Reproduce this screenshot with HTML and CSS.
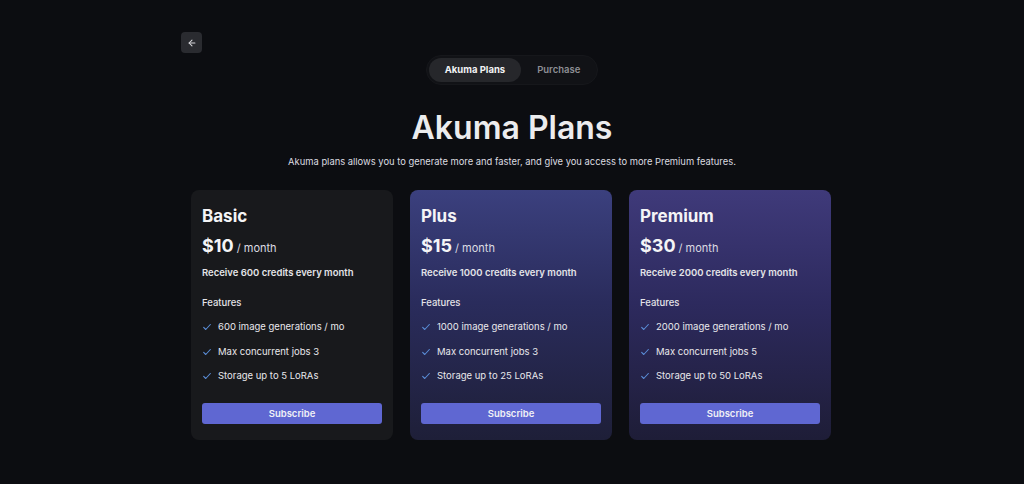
FILE: index.html
```html
<!DOCTYPE html>
<html lang="en">
<head>
<meta charset="utf-8">
<title>Akuma Plans</title>
<link rel="stylesheet" href="styles.css">
</head>
<body>
<div class="page">
  <div class="topbar">
    <button class="back" aria-label="Back">
      <svg width="10" height="10" viewBox="0 0 24 24" fill="none" stroke="currentColor" stroke-width="2.5" stroke-linecap="round" stroke-linejoin="round"><path d="M19 12H5"/><path d="M12 19l-7-7 7-7"/></svg>
    </button>
  </div>
  <div class="tabs-row">
    <div class="tabs">
      <span class="tab active">Akuma Plans</span>
      <span class="tab">Purchase</span>
    </div>
  </div>
  <h1 class="title">Akuma Plans</h1>
  <p class="subtitle">Akuma plans allows you to generate more and faster, and give you access to more Premium features.</p>
  <div class="cards">
    <div class="card basic">
      <h2 class="plan">Basic</h2>
      <div class="price"><span class="amount">$10</span><span class="per">/ month</span></div>
      <div class="credits">Receive 600 credits every month</div>
      <div class="features-label">Features</div>
      <ul class="features">
        <li><svg class="check" viewBox="0 0 12 12"><path d="M2 6.5l2.5 2.5L10 3"/></svg>600 image generations / mo</li>
        <li><svg class="check" viewBox="0 0 12 12"><path d="M2 6.5l2.5 2.5L10 3"/></svg>Max concurrent jobs 3</li>
        <li><svg class="check" viewBox="0 0 12 12"><path d="M2 6.5l2.5 2.5L10 3"/></svg>Storage up to 5 LoRAs</li>
      </ul>
      <button class="subscribe">Subscribe</button>
    </div>
    <div class="card plus">
      <h2 class="plan">Plus</h2>
      <div class="price"><span class="amount">$15</span><span class="per">/ month</span></div>
      <div class="credits">Receive 1000 credits every month</div>
      <div class="features-label">Features</div>
      <ul class="features">
        <li><svg class="check" viewBox="0 0 12 12"><path d="M2 6.5l2.5 2.5L10 3"/></svg>1000 image generations / mo</li>
        <li><svg class="check" viewBox="0 0 12 12"><path d="M2 6.5l2.5 2.5L10 3"/></svg>Max concurrent jobs 3</li>
        <li><svg class="check" viewBox="0 0 12 12"><path d="M2 6.5l2.5 2.5L10 3"/></svg>Storage up to 25 LoRAs</li>
      </ul>
      <button class="subscribe">Subscribe</button>
    </div>
    <div class="card premium">
      <h2 class="plan">Premium</h2>
      <div class="price"><span class="amount">$30</span><span class="per">/ month</span></div>
      <div class="credits">Receive 2000 credits every month</div>
      <div class="features-label">Features</div>
      <ul class="features">
        <li><svg class="check" viewBox="0 0 12 12"><path d="M2 6.5l2.5 2.5L10 3"/></svg>2000 image generations / mo</li>
        <li><svg class="check" viewBox="0 0 12 12"><path d="M2 6.5l2.5 2.5L10 3"/></svg>Max concurrent jobs 5</li>
        <li><svg class="check" viewBox="0 0 12 12"><path d="M2 6.5l2.5 2.5L10 3"/></svg>Storage up to 50 LoRAs</li>
      </ul>
      <button class="subscribe">Subscribe</button>
    </div>
  </div>
</div>
</body>
</html>
```
FILE: styles.css
```css
* { box-sizing: border-box; }
html, body { margin: 0; padding: 0; }
body {
  background: #0c0d11;
  color: #ececef;
  font-family: Inter, "Liberation Sans", sans-serif;
  height: 484px;
  overflow: hidden;
}
.page {
  width: 662px;
  margin: 0 auto;
  padding-top: 32px;
}
.topbar { display: flex; height: 21px; }
.back {
  width: 21px;
  height: 21px;
  border: none;
  border-radius: 4px;
  background: #2a2b30;
  color: #d8d8dc;
  display: flex;
  align-items: center;
  justify-content: center;
  padding: 0;
}
.tabs-row { display: flex; justify-content: center; margin-top: 2px; }
.tabs {
  display: flex;
  padding: 2px;
  gap: 0;
  background: #111216;
  border: 1px solid #16171b;
  border-radius: 16px;
}
.tab {
  height: 24px;
  line-height: 24px;
  padding: 0 16px;
  border-radius: 12px;
  font-size: 9.5px;
  font-weight: 600;
  color: #8d8e94;
}
.tab:last-child { padding-right: 15px; }
.tab.active { background: #26272b; color: #f2f2f4; font-weight: 700; }
.title {
  margin: 23px 0 0;
  text-align: center;
  font-size: 32px;
  line-height: 40px;
  font-weight: 600;
  color: #ececee;
}
.subtitle {
  margin: 7px 0 0;
  text-align: center;
  font-size: 9.4px;
  line-height: 14px;
  color: #dcdce0;
}
.cards {
  display: flex;
  gap: 17px;
  justify-content: center;
  margin-top: 21px;
  padding-right: 2px;
}
.card {
  width: 202px;
  height: 250px;
  border-radius: 8px;
  padding: 16px 11px 16px;
  display: flex;
  flex-direction: column;
}
.card.basic { background: #18191c; }
.card.plus { background: linear-gradient(180deg, #3b407e 0%, #2a2c5c 45%, #1e1f38 100%); }
.card.premium { background: linear-gradient(180deg, #3f3a7a 0%, #2d2a5e 45%, #1e1d37 100%); }
.plan {
  margin: 0;
  font-size: 17px;
  line-height: 20px;
  font-weight: 700;
  color: #f4f4f6;
}
.price { margin-top: 8px; line-height: 24px; }
.amount { font-size: 18px; font-weight: 700; color: #f4f4f6; }
.per { font-size: 11px; color: #dcdce2; margin-left: 3px; }
.credits {
  margin-top: 6px;
  font-size: 9.5px;
  line-height: 14px;
  font-weight: 600;
  color: #e4e4e8;
}
.features-label {
  margin-top: 16px;
  font-size: 9.5px;
  line-height: 14px;
  font-weight: 500;
  color: #e4e4e8;
}
.features {
  list-style: none;
  margin: 10px 0 0;
  padding: 0;
  display: flex;
  flex-direction: column;
  gap: 10.5px;
}
.features li {
  display: flex;
  align-items: center;
  font-size: 9.5px;
  line-height: 14px;
  color: #e8e8ec;
}
.check {
  width: 10px;
  height: 10px;
  margin: 0 6px 0 0;
  fill: none;
  stroke: #5a8ed8;
  stroke-width: 1.3;
  stroke-linecap: round;
  stroke-linejoin: round;
}
.subscribe {
  margin-top: auto;
  height: 21px;
  border: none;
  border-radius: 3px;
  background: #5f67d2;
  color: #f0f0f6;
  font-family: inherit;
  font-size: 9.5px;
  font-weight: 600;
}
```
